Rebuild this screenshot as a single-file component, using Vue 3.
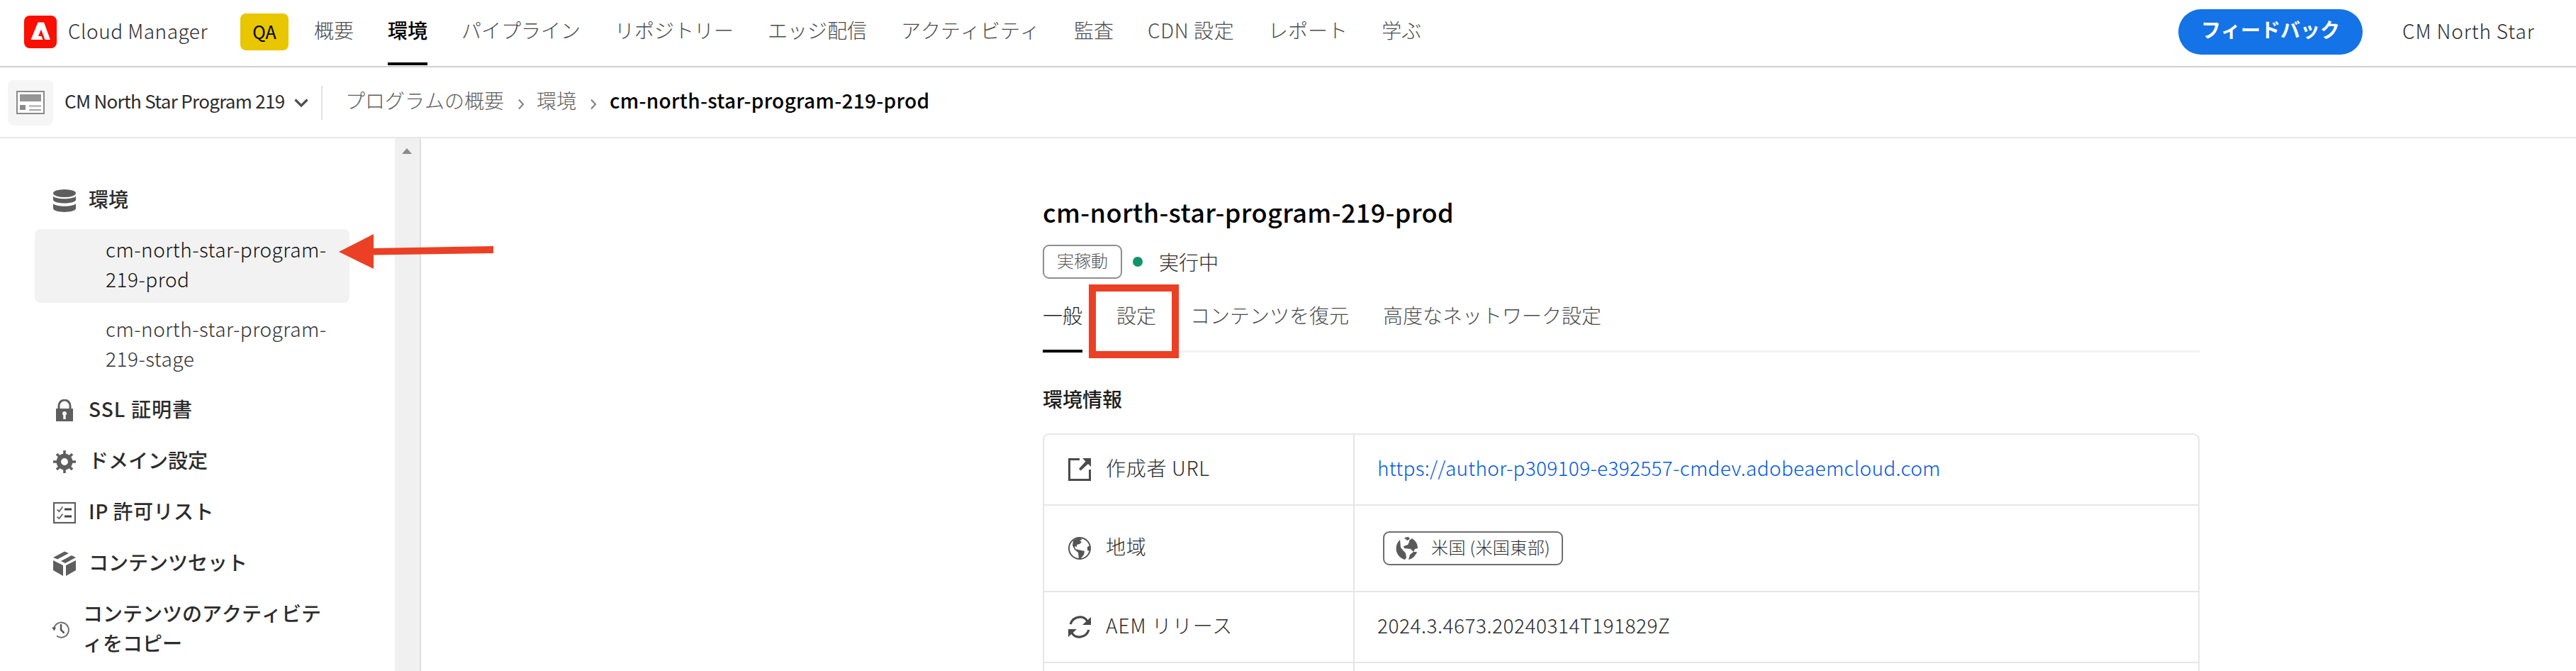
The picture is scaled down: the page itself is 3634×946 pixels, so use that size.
<script setup>
const navItems = ['概要', '環境', 'パイプライン', 'リポジトリー', 'エッジ配信', 'アクティビティ', '監査', 'CDN 設定', 'レポート', '学ぶ']
const tabs = ['一般', '設定', 'コンテンツを復元', '高度なネットワーク設定']
</script>

<template>
  <div class="page">
    <header class="topbar">
      <svg class="logo" viewBox="0 0 46 46"><rect width="46" height="46" rx="8" fill="#fa0f00" /><path fill="#fff" d="M19.500 9.500h8.500L37 34h-7.500l-5.500-14.500-4 9.500h4.500L26.500 34H9.500z" /></svg>
      <span class="brand">Cloud Manager</span>
      <span class="qa">QA</span>
      <nav class="nav">
        <a v-for="(n, i) in navItems" :key="n" :class="{ active: i === 1, mixed: i === 7 }">{{ n }}</a>
      </nav>
      <button class="feedback">フィードバック</button>
      <span class="org">CM North Star</span>
    </header>

    <div class="subbar">
      <span class="tile">
        <svg viewBox="0 0 40 34" width="40" height="34"><rect x="1" y="1" width="38" height="31" fill="#fff" stroke="#8a8a8a" stroke-width="2" /><rect x="5" y="5" width="30" height="10" fill="#959595" /><rect x="5" y="20" width="8" height="7" fill="#8a8a8a" /><path d="M18 21.500h17M18 27h17" stroke="#a5a5a5" stroke-width="2" /></svg>
      </span>
      <span class="program">CM North Star Program 219</span>
      <svg class="chev" viewBox="0 0 20 12"><path d="M1.500 1.500 10 10l8.500-8.500" fill="none" stroke="#505050" stroke-width="3.200" /></svg>
      <span class="sep"></span>
      <span class="crumb">プログラムの概要</span>
      <svg class="gt" viewBox="0 0 10 16"><path d="M2 1.500 8 8l-6 6.500" fill="none" stroke="#808080" stroke-width="2" /></svg>
      <span class="crumb">環境</span>
      <svg class="gt" viewBox="0 0 10 16"><path d="M2 1.500 8 8l-6 6.500" fill="none" stroke="#808080" stroke-width="2" /></svg>
      <b class="current">cm-north-star-program-219-prod</b>
    </div>

    <div class="body">
      <aside class="side">
        <div class="item first">
          <svg viewBox="0 0 32 32" width="32" height="32" fill="#5e5e5e"><ellipse cx="16" cy="5.500" rx="16" ry="5.500" /><path d="M0 9.500c4 5 28 5 32 0V15c-2 6-30 6-32 0zM0 20c4 5 28 5 32 0v7c-2 6.500-30 6.500-32 0z" /></svg>
          <span>環境</span>
        </div>
        <div class="env selected">cm-north-star-program-<br />219-prod</div>
        <div class="env">cm-north-star-program-<br />219-stage</div>
        <div class="item ssl">
          <svg viewBox="0 0 32 32" width="32" height="32"><path d="M8 14V9a8 8 0 0 1 16 0v5" fill="none" stroke="#5e5e5e" stroke-width="3" /><path fill="#5e5e5e" fill-rule="evenodd" d="M4 13h24v18H4zM16 17a3 3 0 0 0-1.700 5.500V28h3.400v-5.500A3 3 0 0 0 16 17z" /></svg>
          <span>SSL 証明書</span>
        </div>
        <div class="item">
          <svg viewBox="0 0 32 32" width="32" height="32"><g stroke="#5e5e5e" stroke-width="3.600"><path d="M16 0v32M0 16h32M5 5l22 22M27 5 5 27" /></g><circle cx="16" cy="16" r="8.200" fill="#fff" stroke="#5e5e5e" stroke-width="6.500" /></svg>
          <span>ドメイン設定</span>
        </div>
        <div class="item ip">
          <svg viewBox="0 0 32 32" width="32" height="32"><rect x="1" y="2" width="30" height="28" fill="none" stroke="#5e5e5e" stroke-width="2.200" /><path d="m5.500 11.500 3 2.500 5-6.500m-8 14 3 2.500 5-6.500" fill="none" stroke="#6e6e6e" stroke-width="2" /><path d="M16 11h10M16 21h10" stroke="#444" stroke-width="3.200" /></svg>
          <span>IP 許可リスト</span>
        </div>
        <div class="item">
          <svg viewBox="0 0 32 36" width="32" height="36" fill="#5e5e5e"><path d="M16 .5 22 3 6 11.500 0 9zM26 6l6 3-15 8-6-3zM0 13l14 7v15L0 27zM32 13l-14 7v15l14-8z" /></svg>
          <span>コンテンツセット</span>
        </div>
        <div class="item copy">
          <svg viewBox="0 0 26 26" width="26" height="26"><path d="M3 11.500A10.500 10.500 0 1 1 7 21.500" fill="none" stroke="#6e6e6e" stroke-width="2" /><path d="M0 9.500h6l-2.500 5z" fill="#555" /><path d="M13 5v8l4.500 4.500" fill="none" stroke="#555" stroke-width="2.500" /></svg>
          <span>コンテンツのアクティビテ<br />ィをコピー</span>
        </div>
      </aside>
      <div class="scroll"><svg viewBox="0 0 14 8" width="14" height="8"><path d="M7 0l7 8H0z" fill="#8a8a8a" /></svg></div>

      <main class="main">
        <h1>cm-north-star-program-219-prod</h1>
        <div class="status"><span class="tag">実稼動</span><i class="dot"></i><span>実行中</span></div>
        <div class="tabs">
          <a v-for="(t, i) in tabs" :key="t" :class="{ active: i === 0, boxed: i === 1 }">{{ t }}</a>
        </div>
        <h2>環境情報</h2>
        <div class="table">
          <div class="row r1">
            <div class="label">
              <svg viewBox="0 0 32 32" width="32" height="32"><path d="M16 1.500H1.500v29h29V16" fill="none" stroke="#4a4a4a" stroke-width="3" /><path d="M20 0h12v12l-4-4-10.500 9.500-2.500-2.500L24.500 4.500z" fill="#4a4a4a" /></svg>
              <span>作成者 URL</span>
            </div>
            <div class="value"><a class="link">https://author-p309109-e392557-cmdev.adobeaemcloud.com</a></div>
          </div>
          <div class="row r2">
            <div class="label">
              <svg viewBox="0 0 32 32" width="32" height="32"><circle cx="16" cy="16" r="15" fill="none" stroke="#555" stroke-width="2" /><path fill="#555" d="M7 5 14 1h4l1 3-3 1 3 2-3 3-4 1v3l-3-1 1 4 4 1 9 2-1 5-5 6h-2l-1-9-5-4-3-6zM31 12l-4 2v5l4 1z" /></svg>
              <span>地域</span>
            </div>
            <div class="value">
              <span class="region">
                <svg viewBox="0 0 32 32" width="32" height="32" fill="#5a5a5a"><path d="M6 4C-3 12-1 28 13 32l2-3-1-6-7-8zM12 1l6-1 2 3-4 2zM19 5l4-3c6 4 8 9 8 14l-4 1-2 4-4-4-9-1-1-3 6-2 2-4zM30 21c-2 6-7 10-12 11l2-7 5-4z" /></svg>
                <span>米国 (米国東部)</span>
              </span>
            </div>
          </div>
          <div class="row r3">
            <div class="label">
              <svg viewBox="0 0 32 32" width="32" height="32"><path d="M3 12C7 0 22-1 27 8M29 20C25 32 10 33 5 24" fill="none" stroke="#4a4a4a" stroke-width="3.200" /><path fill="#4a4a4a" d="M32 2v11H20zM0 30V19h12z" /></svg>
              <span>AEM リリース</span>
            </div>
            <div class="value"><span class="version">2024.3.4673.20240314T191829Z</span></div>
          </div>
          <div class="row r4"><div class="label"></div><div class="value"></div></div>
        </div>
      </main>
    </div>
    <svg class="arrow" viewBox="0 0 218 50"><path d="M0 25 49 0v20l169-3v10L49 29.500V49z" fill="#eb4025" /></svg>
  </div>
</template>

<style>
body { margin: 0; background: #fff; }
</style>

<style scoped>
.page { position: relative; width: 3634px; height: 946px; overflow: hidden; background: #fff; color: #2c2c2c; font: 400 28px/42px "Noto Sans CJK JP", "Noto Sans", sans-serif; white-space: nowrap; box-sizing: border-box; }
.page *, .page *::before { box-sizing: border-box; }
.page svg { flex: none; display: block; }
.topbar { display: flex; align-items: center; height: 95px; padding: 0 0 5px 34px; border-bottom: 2px solid #cfcfcf; }
.logo { width: 46px; height: 46px; margin-top: 2px; }
.brand { width: 243px; margin: 0 0 2px 16px; font-weight: 300; letter-spacing: 0.5px; }
.qa { width: 68px; height: 52px; margin-top: 2px; border-radius: 8px; background: #e8c600; color: #000; font-size: 25px; line-height: 51px; text-align: center; }
.nav { display: flex; gap: 48px; margin-left: 36px; height: 95px; margin-bottom: -5px; font-kerning: none; }
.nav a { height: 95px; line-height: 86px; color: #4b4b4b; font-weight: 300; }
.nav .active { height: 93px; color: #000; font-weight: 500; border-bottom: 4px solid #000; }
.nav .mixed { width: 122px; letter-spacing: 0.65px; }
.feedback { width: 260px; height: 64px; margin: 2px 0 0 auto; padding: 0 0 8px; border: 0; border-radius: 32px; background: #1473e6; color: #fff; font: 700 28px/56px "Noto Sans CJK JP", sans-serif; font-kerning: none; }
.org { width: 245px; margin: 0 0 2px 56px; font-weight: 300; letter-spacing: 0.9px; }
.subbar { display: flex; align-items: center; height: 100px; padding: 2px 0 0 11px; border-bottom: 2px solid #e8e8e8; }
.tile { display: flex; align-items: center; justify-content: center; width: 64px; height: 64px; border-radius: 8px; background: #f5f5f5; }
.program { width: 324px; margin: -7px 0 0 16px; font-size: 26px; letter-spacing: -0.7px; }
.chev { width: 20px; height: 12px; }
.sep { width: 2px; height: 48px; margin: 0 32px 0 18px; background: #e2e2e2; }
.crumb { margin-top: -8px; color: #5e5e5e; font-weight: 300; font-kerning: none; }
.gt { width: 10px; height: 16px; margin: 4px 17px 0 19px; }
.current { margin: -8px 0 0 1px; color: #000; font-weight: 500; letter-spacing: 0.3px; }
.body { display: flex; height: 751px; }
.side { width: 557px; padding-top: 64px; }
.item { display: flex; align-items: center; gap: 18px; height: 42px; margin: 0 0 30px 75px; font-weight: 500; }
.item svg { margin-top: 5px; }
.first { margin-bottom: 22px; }
.env { width: 444px; height: 104px; margin: 0 0 8px 49px; padding: 7px 0 0 100px; border-radius: 8px; color: #333; font-weight: 300; letter-spacing: 0.5px; }
.selected { background: #f2f2f2; color: #111; }
.ssl { margin-top: 16px; letter-spacing: 1.1px; }
.ip { letter-spacing: 0.5px; }
.copy { height: 84px; margin-left: 73px; font-kerning: none; }
.scroll { width: 37px; padding: 14px 0 0 10px; background: #f0f0f0; border-right: 2px solid #dedede; }
.main { width: 1632px; margin-left: 877px; padding-top: 75px; }
h1 { height: 56px; margin: 0; font-weight: 500; font-size: 36px; line-height: 56px; color: #000; letter-spacing: 0.38px; }
.status { display: flex; align-items: center; height: 48px; margin-top: 19px; font-weight: 300; }
.tag { width: 112px; height: 48px; border: 2px solid #8e8e8e; border-radius: 9px; color: #555; font-size: 24px; line-height: 40px; font-weight: 300; text-align: center; }
.dot { width: 14px; height: 14px; margin: 0 23px 0 15px; border-radius: 50%; background: #12926a; }
.tabs { display: flex; gap: 48px; height: 104px; border-bottom: 3px solid #f2f2f2; }
.tabs a { position: relative; height: 104px; line-height: 102px; color: #4b4b4b; font-weight: 300; font-kerning: none; }
.tabs .active { color: #1c1c1c; border-bottom: 4px solid #000; }
.boxed::before { content: ""; position: absolute; left: -39px; top: 8px; width: 127px; height: 104px; border: 10px solid #eb4025; }
h2 { height: 42px; margin: 44px 0 0; font-weight: 500; font-size: 28px; line-height: 42px; color: #1c1c1c; }
.table { margin-top: 28px; border: 2px solid #e6e6e6; border-radius: 9px; }
.row { display: flex; border-bottom: 2px solid #e6e6e6; color: #2c2c2c; }
.r1 { height: 100px; }
.r2 { height: 122px; }
.r3 { height: 100px; }
.r4 { height: 60px; }
.label { display: flex; align-items: center; gap: 21px; width: 438px; padding-left: 34px; border-right: 2px solid #e6e6e6; font-weight: 300; letter-spacing: 0.7px; }
.r3 .label { letter-spacing: 1px; }
.label span, .link, .version { margin-bottom: 7px; }
.value { display: flex; align-items: center; padding-left: 32px; font-weight: 300; }
.link { color: #0058e0; letter-spacing: 0.3px; }
.version { letter-spacing: 0.52px; }
.region { display: flex; align-items: center; gap: 18px; width: 254px; height: 48px; margin-left: 8px; padding-left: 16px; border: 2px solid #6e6e6e; border-radius: 9px; color: #2c2c2c; font-size: 24px; letter-spacing: 0.4px; }
.region span { margin-bottom: 5px; }
.arrow { position: absolute; left: 478px; top: 330px; width: 218px; height: 50px; }
</style>
